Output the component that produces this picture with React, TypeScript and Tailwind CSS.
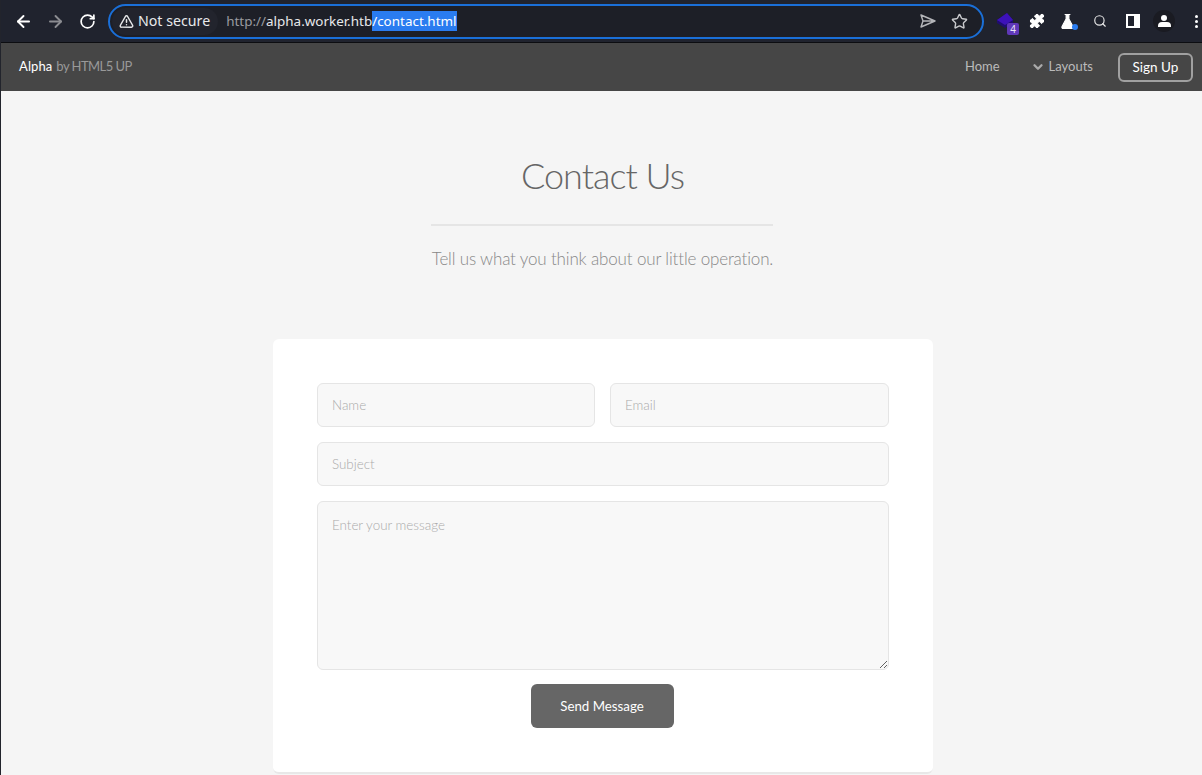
import React from "react";
import { ArrowLeft, ArrowRight, RotateCw, TriangleAlert, Star, Puzzle, FlaskConical, Search, ChevronDown } from "lucide-react";

function Toolbar() {
  return (
    <div className="h-[43px] shrink-0 flex items-center bg-[#20232e] border-b border-[#0c0d11] pl-[14px] pr-[3px] font-['Noto_Sans',sans-serif]">
      <ArrowLeft className="shrink-0 w-[19px] h-[19px] text-white" strokeWidth={2.4} />
      <ArrowRight className="shrink-0 w-[19px] h-[19px] text-[#8b8c91] ml-[13px]" strokeWidth={2.4} />
      <RotateCw className="shrink-0 w-[17px] h-[17px] text-white ml-[14px]" strokeWidth={2.4} />
      <div className="shrink-0 ml-[12px] w-[876px] h-[35px] flex items-center rounded-full border-2 border-[#1a6fd8] bg-[#1d1f27] pl-[2px] pr-[14px]">
        <div className="h-[27px] flex items-center gap-[4px] rounded-full bg-[#22242d] pl-[7px] pr-[8px] text-[#e8e9eb] text-[14.2px]">
          <TriangleAlert className="w-[15px] h-[15px]" strokeWidth={2.4} />
          <span>Not secure</span>
        </div>
        <div className="ml-[8px] flex items-center text-[13.45px] leading-[20px]">
          <span className="text-[#9a9ba0]">http://</span>
          <span className="text-[#e8e9eb]">alpha.worker.htb</span>
          <span className="bg-[#2a7cf0] text-white">/contact.html</span>
        </div>
        <svg viewBox="0 0 16 14" className="ml-auto w-[16px] h-[14px] text-[#b4b5b9]" fill="none" stroke="currentColor" strokeWidth="1.4" strokeLinejoin="round">
          <path d="M1 1 L15 7 L1 13 L3 7 Z M3 7 H15" />
        </svg>
        <Star className="ml-[15px] w-[17px] h-[17px] text-[#c8c9cc]" strokeWidth={2} />
      </div>
      <div className="shrink-0 relative ml-[13px] w-[22px] h-[22px]">
        <svg viewBox="0 0 22 22" className="w-[22px] h-[22px]">
          <path d="M0 10 L10 3 L16 10 L16 13 L8 18 L0 13 Z" fill="#1f0d70" />
          <path d="M0 10 L10 3 L16 10 L8 15 Z" fill="#3d12b8" />
        </svg>
        <span className="absolute left-[10px] top-[13px] w-[12px] h-[12px] rounded-[2px] bg-[#5f38b8] text-[#e8e4f5] text-[10px] leading-[12px] text-center">4</span>
      </div>
      <Puzzle className="shrink-0 ml-[10px] w-[16px] h-[16px] text-white fill-white" strokeWidth={1.5} />
      <div className="shrink-0 relative ml-[14px] w-[17px] h-[17px]">
        <FlaskConical className="w-[17px] h-[17px] text-white fill-white" strokeWidth={1.5} />
        <span className="absolute right-[-2px] bottom-[0px] w-[6px] h-[6px] rounded-full bg-[#2a7cf0]" />
      </div>
      <Search className="shrink-0 ml-[17px] w-[14px] h-[14px] text-[#e8e8e8]" strokeWidth={2} />
      <div className="shrink-0 ml-[19px] w-[14px] h-[14px] border-2 border-white flex justify-start">
        <div className="w-[6px] bg-[#20232e]" />
        <div className="flex-1 bg-white" />
      </div>
      <div className="shrink-0 ml-[13px] w-[22px] h-[22px] rounded-full bg-[#1a1b22] flex flex-col items-center justify-center">
        <div className="w-[6px] h-[6px] rounded-full bg-white" />
        <div className="w-[13px] h-[5px] rounded-t-[4px] bg-white mt-[1px]" />
      </div>
      <div className="shrink-0 ml-[20px] flex flex-col gap-[2px]">
        <span className="w-[3px] h-[3px] rounded-full bg-white" />
        <span className="w-[3px] h-[3px] rounded-full bg-white" />
        <span className="w-[3px] h-[3px] rounded-full bg-white" />
      </div>
    </div>
  );
}

function Navbar() {
  return (
    <div className="h-[48px] shrink-0 flex items-center bg-[#464646] pl-[18px] pr-[9px] text-[13px]">
      <span className="text-white tracking-[0.1px]">Alpha</span>
      <span className="ml-[4px] text-[#999] tracking-[-0.55px]">by HTML5 UP</span>
      <span className="ml-auto text-[#bbb]">Home</span>
      <ChevronDown className="ml-[31px] w-[14px] h-[14px] text-[#aaa]" strokeWidth={4} />
      <span className="ml-[4px] text-[#bbb]">Layouts</span>
      <span className="ml-[25px] w-[75px] h-[29px] flex items-center justify-center rounded-[6px] border-2 border-[#a0a0a0] text-white text-[13.5px]">Sign Up</span>
    </div>
  );
}

const fieldClass =
  "h-[44px] px-[14px] rounded-[6px] border border-[#e5e5e5] bg-[#f8f8f8] text-[13.4px] font-light text-[#777] placeholder:text-[#aaa] outline-none";

function ContactForm() {
  return (
    <div className="pl-[3px] mt-[68px]">
      <div className="w-[660px] mx-auto h-[435px] rounded-[6px] bg-white border-b-2 border-[#e8e8e8] px-[44px] pt-[44px]">
        <form className="flex flex-col gap-[15px]">
          <div className="flex gap-[15px]">
            <input className={`${fieldClass} w-[278px] shrink-0`} placeholder="Name" />
            <input className={`${fieldClass} flex-1 min-w-0`} placeholder="Email" />
          </div>
          <input className={`${fieldClass} w-full`} placeholder="Subject" />
          <textarea className="w-full h-[169px] px-[14px] py-[13px] rounded-[6px] border border-[#e5e5e5] bg-[#f8f8f8] text-[13.4px] font-light text-[#777] placeholder:text-[#aaa] outline-none" placeholder="Enter your message" />
          <button type="button" className="self-center mr-[2px] -mt-[1px] w-[143px] h-[44px] pt-px rounded-[6px] bg-[#666] text-white text-[13.3px]">
            Send Message
          </button>
        </form>
      </div>
    </div>
  );
}

export default function App() {
  return (
    <div className="w-[1202px] h-[775px] overflow-hidden flex flex-col bg-[#f5f5f5] border-l border-[#22242c] font-['Lato',sans-serif]">
      <div className="-ml-px">
        <Toolbar />
      </div>
      <Navbar />
      <div className="text-center">
        <h1 className="mt-[60px] pl-[2px] text-[36px] leading-[48px] font-light text-[#666] tracking-[-1px]">Contact Us</h1>
        <div className="w-[342px] mx-auto mt-[25px] border-t-2 border-[#e5e5e5]" />
        <p className="mt-[21px] pl-[2px] text-[17px] leading-[24px] font-light text-[#888] tracking-[-0.16px]">Tell us what you think about our little operation.</p>
      </div>
      <ContactForm />
    </div>
  );
}
